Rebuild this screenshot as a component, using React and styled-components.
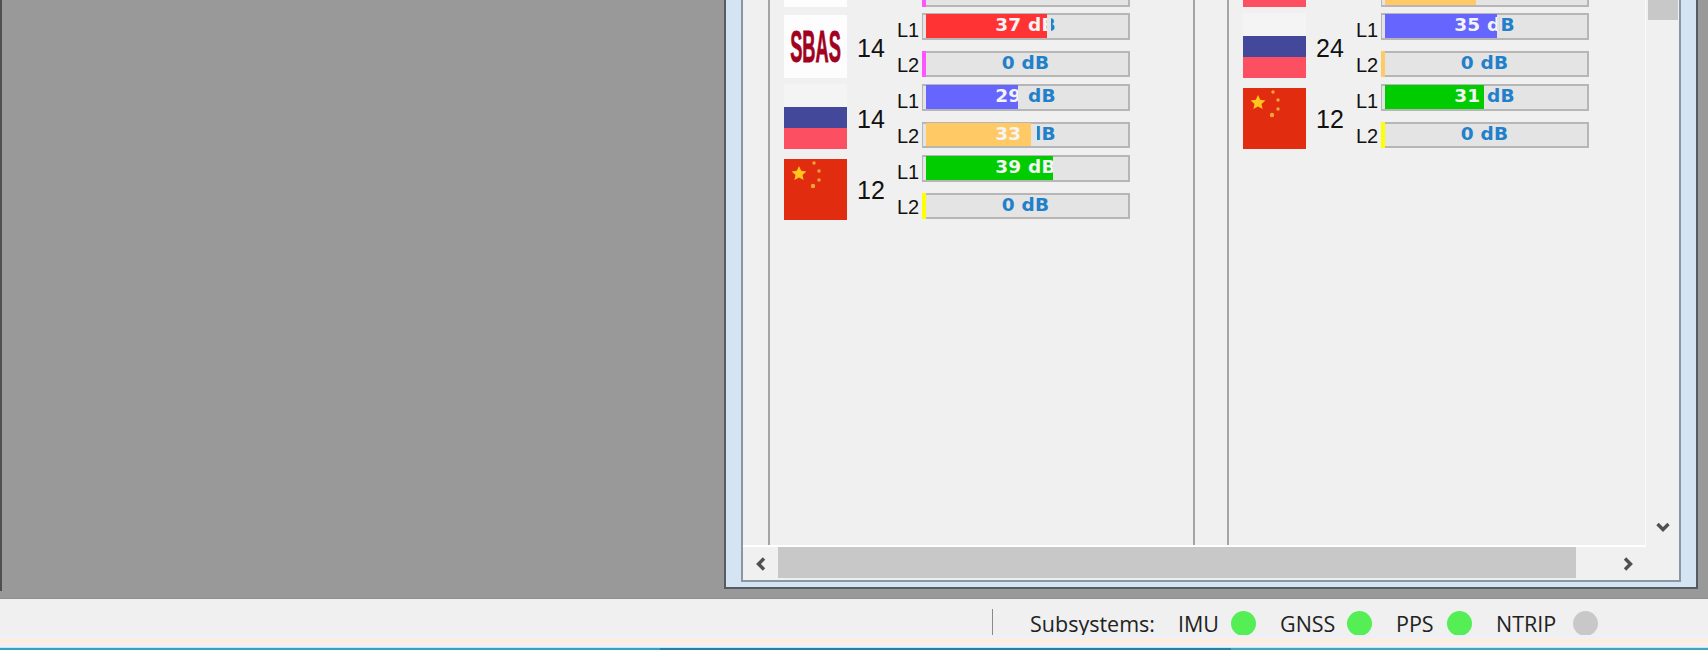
import React from "react";
import styled, { createGlobalStyle } from "styled-components";

const Global = createGlobalStyle`
  html, body { margin: 0; padding: 0; background: #f0f0f0; overflow: hidden; }
  #root { width: 1708px; height: 650px; }
`;

const Page = styled.div`
  width: 1708px;
  height: 650px;
  display: flex;
  flex-direction: column;
  overflow: hidden;
  font-family: "Liberation Sans", Arial, sans-serif;
`;

const Workspace = styled.div`
  height: 599px;
  flex: none;
  display: flex;
  justify-content: space-between;
  background: #999999;
  padding: 0 10px 9px 0;
  box-sizing: border-box;
  border-bottom: 1px solid #8e8e8e;
`;

const EdgeLine = styled.div`
  width: 2px;
  height: 591px;
  background: #4f4f4f;
`;

const MdiWindow = styled.div`
  width: 974px;
  box-sizing: border-box;
  background: #d5e4f3;
  border: 2px solid #555c63;
  border-top: 0;
  padding: 0 15px 5px 15px;
  display: flex;
`;

const Frame = styled.div`
  flex: 1;
  min-width: 0;
  display: grid;
  grid-template-columns: 1fr 33px;
  grid-template-rows: 547px 1fr;
  background: #f0f0f0;
  border: solid #8a97a3;
  border-width: 0 2px 2px 2px;
`;

const Viewport = styled.div`
  display: grid;
  grid-template-columns: 27px 425px 34px 1fr;
  background: #f0f0f0;
  border-bottom: 2px solid #ffffff;
  border-right: 1px solid #fafafa;
  overflow: hidden;
`;

const Cell = styled.div`
  border-right: ${(p) => (p.$line ? "2px solid #a5a5a5" : "0")};
  box-sizing: border-box;
  padding-left: ${(p) => p.$inset || 0}px;
  overflow: hidden;
  min-width: 0;
`;

const Rows = styled.div`
  display: flex;
  flex-direction: column;
`;

const StubRow = styled.div`
  height: 13px;
  display: flex;
  align-items: flex-start;
`;

const StubFlag = styled.div`
  width: 63px;
  height: 7px;
  flex: none;
  background: ${(p) => p.$color};
  margin-right: 75px;
`;

const SatRow = styled.div`
  height: 71px;
  display: flex;
  align-items: flex-start;
`;

const flagShift = { sbas: 2, ru: 0, cn: 4 };

const FlagBox = styled.div`
  width: 63px;
  flex: none;
  margin-top: ${(p) => flagShift[p.$kind]}px;
  height: ${(p) => (p.$kind === "cn" ? 61 : p.$kind === "ru" ? 65 : 63)}px;
`;

const SbasFlag = styled(FlagBox)`
  background: #fdfdfd;
  display: flex;
  align-items: center;
  justify-content: center;
`;

const SbasText = styled.span`
  font: bold 22px/1 "Liberation Sans", Arial, sans-serif;
  color: #a1001f;
  transform: scale(0.83, 2);
  margin-top: 2px;
  -webkit-text-stroke: 0.4px #a1001f;
`;

const RuFlag = styled(FlagBox)`
  background: linear-gradient(#f4f4f4 0 23px, #43489a 23px 44px, #fd4f62 44px);
`;

const CnFlag = styled(FlagBox)`
  background: #e22c0f;
`;

const CnSvg = styled.svg`
  display: block;
`;

const SatCount = styled.div`
  width: 50px;
  flex: none;
  box-sizing: border-box;
  padding: 20px 0 0 10px;
  font-size: 25px;
  line-height: 30px;
  color: #111;
`;

const Bands = styled.div`
  display: flex;
  flex-direction: column;
  gap: 11px;
`;

const Band = styled.div`
  display: flex;
  align-items: flex-start;
  height: ${(p) => (p.$first ? 27 : 26)}px;
`;

const BandName = styled.div`
  width: 25px;
  flex: none;
  font-size: 20px;
  line-height: 20px;
  color: #111;
  padding-top: ${(p) => (p.$first ? 7 : 4)}px;
`;

const Track = styled.div`
  position: relative;
  width: 208px;
  height: ${(p) => (p.$first ? 27 : 26)}px;
  box-sizing: border-box;
  border: 2px solid #b6b6b6;
  border-left-width: 1px;
  background: #e4e4e4;
  flex: none;
`;

const StubTrack = styled(Track)`
  height: 7px;
  border-top: 0;
`;

const DbText = styled.div`
  position: absolute;
  left: 0;
  top: -3px;
  width: 205px;
  height: 26px;
  font: bold 18.5px/26px "DejaVu Sans", Verdana, sans-serif;
  letter-spacing: 0.2px;
  text-align: center;
  white-space: nowrap;
  color: #2180c9;
`;

const Fill = styled.div`
  position: absolute;
  left: ${(p) => (p.$zero ? -1 : 3)}px;
  top: ${(p) => (p.$zero ? -2 : -1)}px;
  bottom: ${(p) => (p.$zero ? -2 : 0)}px;
  background: ${(p) => p.$color};
  overflow: hidden;
`;

const FillText = styled(DbText)`
  left: -3px;
  top: -2px;
  color: #f4f4f4;
`;

const VScroll = styled.div`
  background: #f0f0f0;
  display: flex;
  flex-direction: column;
  align-items: center;
  justify-content: space-between;
  padding-bottom: 12px;
`;

const VThumb = styled.div`
  width: 30px;
  height: 20px;
  background: #c8c8c8;
`;

const HScroll = styled.div`
  grid-column: 1 / span 2;
  display: flex;
  align-items: stretch;
  background: #f0f0f0;
`;

const HArrow = styled.div`
  width: ${(p) => p.$w}px;
  flex: none;
  display: flex;
  align-items: center;
  justify-content: center;
`;

const HThumb = styled.div`
  width: 798px;
  flex: none;
  background: #c8c8c8;
  margin-bottom: 2px;
`;

const Chevron = ({ d }) => (
  <svg width="16" height="16" viewBox="0 0 16 16">
    <path d={d} fill="none" stroke="#505050" strokeWidth="3.4" />
  </svg>
);

const StatusBar = styled.div`
  flex: 1;
  display: flex;
  flex-direction: column;
  background: #f0f0f0;
`;

const StatusContent = styled.div`
  height: 23px;
  flex: none;
  margin: 13px 0 0;
  display: flex;
  align-items: center;
  padding: 0 0 0 992px;
  font-family: "Open Sans", "Liberation Sans", sans-serif;
  font-size: 21.5px;
  color: #222;
`;

const Divider = styled.div`
  width: 1px;
  height: 30px;
  background: #8a8a8a;
  margin-right: 37px;
`;

const StatusLabel = styled.span`
  width: ${(p) => p.$w}px;
  flex: none;
  white-space: nowrap;
`;

const Led = styled.span`
  width: 25px;
  height: 25px;
  border-radius: 50%;
  flex: none;
  background: ${(p) => (p.$on ? "#55ee55" : "#c8c8c8")};
  margin-right: 24px;
`;

const BottomGlow = styled.div`
  height: 12px;
  flex: none;
  margin-top: auto;
  background: linear-gradient(#ebf0fa 0 3px, #fdeede 3px 8px, #f6eef4 8px);
`;

const Taskline = styled.div`
  height: 2px;
  flex: none;
  border-top: 1px solid #b8eef8;
  background: linear-gradient(90deg, #3aa2bf 0 660px, #2a7f9f 660px 1231px, #45a5b5 1231px);
`;

const CnFlagArt = () => (
  <CnSvg width="63" height="61" viewBox="0 0 63 61">
    <polygon
      points="15,7 17.2,11.8 22.4,12.4 18.5,15.9 19.6,21 15,18.4 10.4,21 11.5,15.9 7.6,12.4 12.8,11.8"
      fill="#ffc61e"
    />
    <g fill="#f3a638">
      <circle cx="30" cy="4" r="1.7" />
      <circle cx="35" cy="12" r="1.7" />
      <circle cx="35" cy="21" r="1.7" />
      <circle cx="29" cy="27" r="2.2" />
    </g>
  </CnSvg>
);

const Flag = ({ kind }) => {
  if (kind === "sbas")
    return (
      <SbasFlag $kind="sbas">
        <SbasText>SBAS</SbasText>
      </SbasFlag>
    );
  if (kind === "ru") return <RuFlag $kind="ru" />;
  return (
    <CnFlag $kind="cn">
      <CnFlagArt />
    </CnFlag>
  );
};

const Bar = ({ first, db, color, width, blueFrom, whiteTo }) => {
  const zero = db === 0;
  const text = `${db} dB`;
  return (
    <Track $first={first}>
      <DbText style={blueFrom ? { clipPath: `inset(0 0 0 ${blueFrom}px)` } : undefined}>{text}</DbText>
      <Fill $zero={zero} $color={color} style={{ width: zero ? 4 : width }}>
        {!zero && (
          <FillText style={whiteTo ? { clipPath: `inset(0 ${205 - whiteTo}px 0 0)` } : undefined}>
            {text}
          </FillText>
        )}
      </Fill>
    </Track>
  );
};

const Stub = ({ flagColor, color, width, zero }) => (
  <StubRow>
    <StubFlag $color={flagColor} />
    <StubTrack>
      <Fill $zero={zero} $color={color} style={{ width }} />
    </StubTrack>
  </StubRow>
);

const Satellite = ({ flag, count, l1, l2 }) => (
  <SatRow>
    <Flag kind={flag} />
    <SatCount>{count}</SatCount>
    <Bands>
      <Band $first>
        <BandName $first>L1</BandName>
        <Bar first {...l1} />
      </Band>
      <Band>
        <BandName>L2</BandName>
        <Bar {...l2} />
      </Band>
    </Bands>
  </SatRow>
);

const RED = "#ff3333";
const BLUE = "#6666ff";
const ORANGE = "#ffc966";
const GREEN = "#00cc00";
const PINK = "#ff55ff";
const YELLOW = "#ffff00";

const leftRows = [
  {
    flag: "sbas",
    count: "14",
    l1: { db: 37, color: RED, width: 121, blueFrom: 128 },
    l2: { db: 0, color: PINK },
  },
  {
    flag: "ru",
    count: "14",
    l1: { db: 29, color: BLUE, width: 92, blueFrom: 105 },
    l2: { db: 33, color: ORANGE, width: 105, blueFrom: 114, whiteTo: 100 },
  },
  {
    flag: "cn",
    count: "12",
    l1: { db: 39, color: GREEN, width: 127, blueFrom: 140 },
    l2: { db: 0, color: YELLOW },
  },
];

const rightRows = [
  {
    flag: "ru",
    count: "24",
    l1: { db: 35, color: BLUE, width: 112, blueFrom: 117 },
    l2: { db: 0, color: ORANGE },
  },
  {
    flag: "cn",
    count: "12",
    l1: { db: 31, color: GREEN, width: 99, blueFrom: 105 },
    l2: { db: 0, color: YELLOW },
  },
];

export default function App() {
  return (
    <Page>
      <Global />
      <Workspace>
        <EdgeLine />
        <MdiWindow>
          <Frame>
            <Viewport>
              <Cell $line />
              <Cell $line $inset={14}>
                <Rows>
                  <Stub flagColor="#fdfdfd" color={PINK} width={4} zero />
                  {leftRows.map((r, i) => (
                    <Satellite key={i} {...r} />
                  ))}
                </Rows>
              </Cell>
              <Cell $line />
              <Cell $inset={14}>
                <Rows>
                  <Stub flagColor="#fd4f62" color={ORANGE} width={91} />
                  {rightRows.map((r, i) => (
                    <Satellite key={i} {...r} />
                  ))}
                </Rows>
              </Cell>
            </Viewport>
            <VScroll>
              <VThumb />
              <Chevron d="M2.5 5 L8 10.5 L13.5 5" />
            </VScroll>
            <HScroll>
              <HArrow $w={35}>
                <Chevron d="M11 2.5 L5.5 8 L11 13.5" />
              </HArrow>
              <HThumb />
              <HArrow $w={103}>
                <Chevron d="M5 2.5 L10.5 8 L5 13.5" />
              </HArrow>
            </HScroll>
          </Frame>
        </MdiWindow>
      </Workspace>
      <StatusBar>
        <StatusContent>
          <Divider />
          <StatusLabel $w={148}>Subsystems:</StatusLabel>
          <StatusLabel $w={53}>IMU</StatusLabel>
          <Led $on />
          <StatusLabel $w={67}>GNSS</StatusLabel>
          <Led $on />
          <StatusLabel $w={51}>PPS</StatusLabel>
          <Led $on />
          <StatusLabel $w={77}>NTRIP</StatusLabel>
          <Led />
        </StatusContent>
        <BottomGlow />
        <Taskline />
      </StatusBar>
    </Page>
  );
}
